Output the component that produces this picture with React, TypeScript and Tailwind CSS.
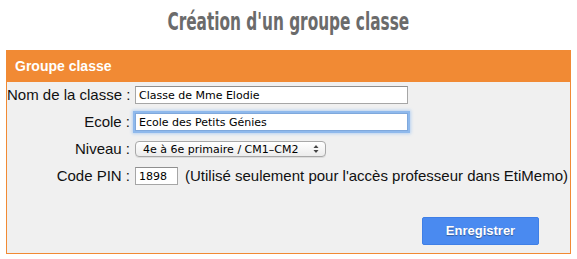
import React from 'react';

// Formulaire de création d'un groupe classe (EtiMemo)
const rowLabel = 'w-[128px] shrink-0 whitespace-nowrap text-right pr-[5px] text-[15px] leading-[18px] text-[#111]';
const fieldText = "font-['DejaVu_Sans',sans-serif] text-[11px] text-black";

const App: React.FC = () => {
  return (
    <div className="w-[577px] h-[259px] bg-white font-['Liberation_Sans',Arial,sans-serif]">
      {/* Titre */}
      <div className="h-[50px] flex justify-center pt-[8px]">
        <h1 className="font-['Liberation_Sans_Narrow','DejaVu_Sans_Condensed',sans-serif] font-bold text-[24px] leading-[28px] text-[#6b6b6b] scale-x-[0.71] whitespace-nowrap">
          Création d'un groupe classe
        </h1>
      </div>

      <div className="mx-[6px] w-[565px] border border-t-0 border-[#f18a34]">
        <div className="h-[32px] bg-[#f18a34] flex items-center px-[8px]">
          <span className="text-white font-bold text-[14px]">Groupe classe</span>
        </div>

        <div className="bg-[#f0f0f0] pt-[4px] pb-[8px]">
          <div className="flex flex-col gap-[9px]">
            <div className="flex items-center h-[18px]">
              <label className={rowLabel}>Nom de la classe :</label>
              <input
                defaultValue="Classe de Mme Elodie"
                className={`w-[273px] h-[18px] bg-white border border-[#a6a6a6] border-t-[#8f8f8f] px-[3px] outline-none ${fieldText}`}
              />
            </div>
            <div className="flex items-center h-[18px]">
              <label className={rowLabel}>Ecole :</label>
              <input
                defaultValue="Ecole des Petits Génies"
                className={`w-[273px] h-[18px] bg-white border border-[#7fa8dc] px-[3px] outline-none shadow-[0_0_0_2px_#8fb9ec,0_0_3px_3px_#b9d3f2] ${fieldText}`}
              />
            </div>
            <div className="flex items-center h-[18px]">
              <label className={rowLabel}>Niveau :</label>
              <div className="w-[191px] h-[16px] rounded-[4px] border border-[#a8a8a8] bg-gradient-to-b from-white to-[#ececec] flex items-center justify-between pl-[7px] pr-[6px] shadow-[0_1px_0_#dcdcdc]">
                <span className="font-['DejaVu_Sans',sans-serif] text-[11px] leading-none text-black whitespace-nowrap">
                  4e à 6e primaire / CM1–CM2
                </span>
                <svg width="6" height="10" viewBox="0 0 6 10">
                  <path d="M0.5 4 L3 1 L5.5 4 Z" fill="#444" />
                  <path d="M0.5 6 L3 9 L5.5 6 Z" fill="#444" />
                </svg>
              </div>
            </div>
            <div className="flex items-center h-[18px]">
              <label className={rowLabel}>Code PIN :</label>
              <input
                defaultValue="1898"
                className={`w-[43px] h-[18px] bg-white border border-[#a6a6a6] border-t-[#8f8f8f] px-[3px] outline-none ${fieldText}`}
              />
              <span className="ml-[7px] text-[15px] leading-[18px] text-[#111] whitespace-nowrap">
                (Utilisé seulement pour l'accès professeur dans EtiMemo)
              </span>
            </div>
          </div>

          <div className="flex justify-end pr-[31px] mt-[32px]">
            <button className="w-[117px] h-[28px] rounded-[2px] bg-[#4a8af0] border border-[#3f7fe6] text-white font-bold text-[13px] [text-shadow:0_1px_1px_rgba(0,0,0,0.35)]">
              Enregistrer
            </button>
          </div>
        </div>
      </div>
    </div>
  );
};

export default App;
